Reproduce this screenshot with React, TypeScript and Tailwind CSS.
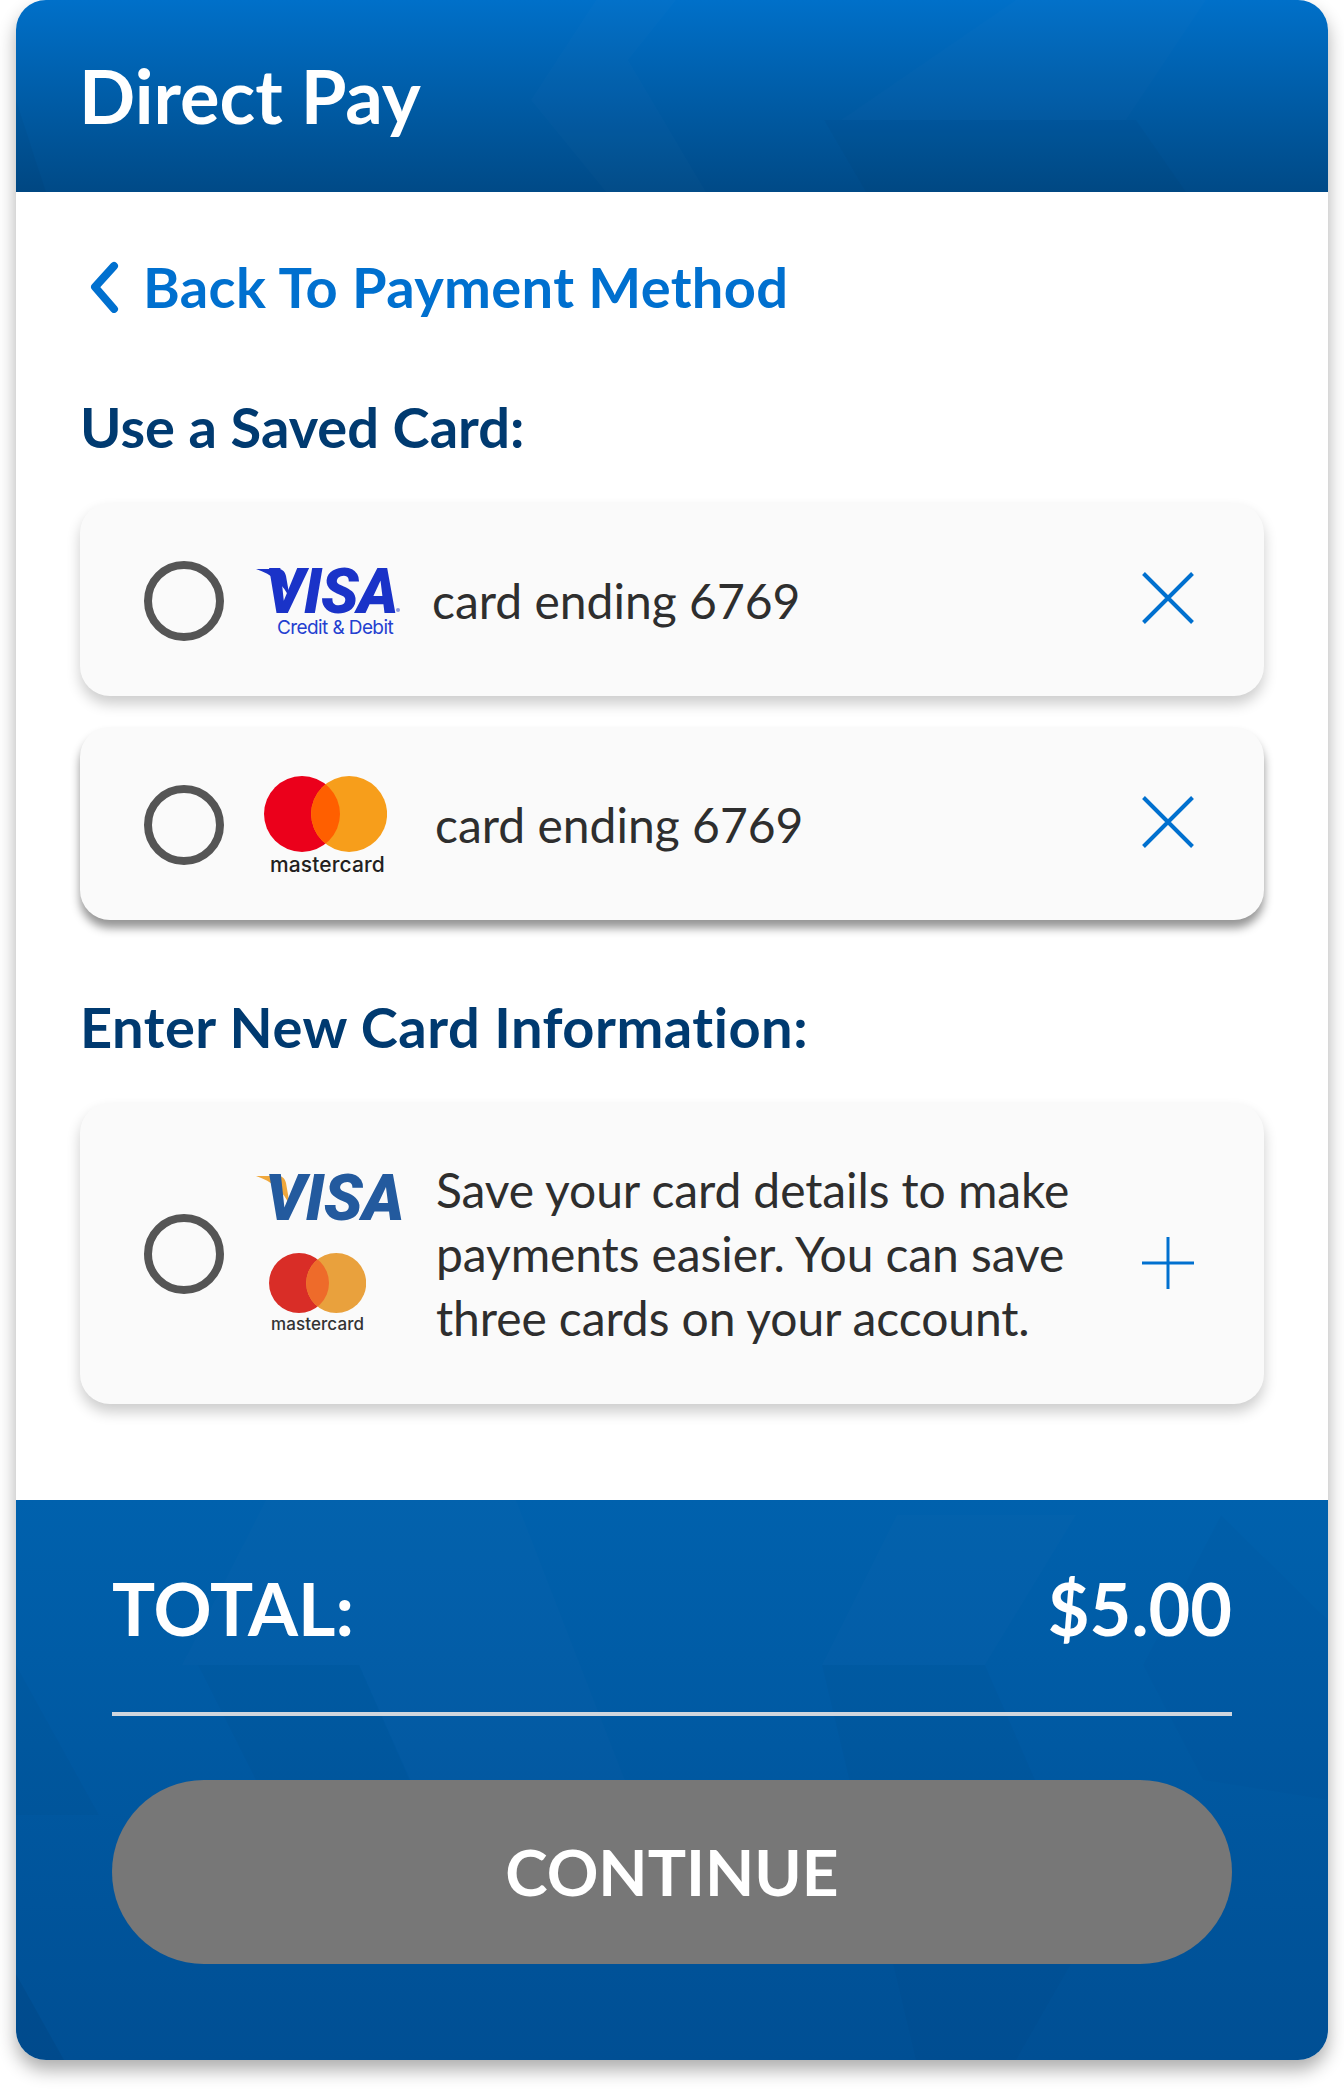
const lato = "font-['Lato','Liberation_Sans',sans-serif] [font-variant-ligatures:none]";

const HeaderFacets = () => (
  <svg className="absolute inset-0 h-full w-full" viewBox="0 0 1312 192" preserveAspectRatio="none">
    <polygon points="808,120 1120,120 1170,192 850,192" fill="#000" opacity="0.025" />
    <polygon points="580,0 515,100 590,192 690,192 612,60 660,0" fill="#fff" opacity="0.012" />
    <polygon points="1000,0 1190,0 1110,120 825,120" fill="#fff" opacity="0.01" />
    <polygon points="0,100 30,192 0,192" fill="#000" opacity="0.03" />
  </svg>
);

const FooterFacets = () => (
  <svg className="absolute inset-0 h-full w-full" viewBox="0 0 1312 560" preserveAspectRatio="none">
    <polygon points="0,165 83,315 0,315" fill="#000" opacity="0.02" />
    <polygon points="0,474 48,560 0,560" fill="#000" opacity="0.05" />
    <polygon points="250,0 166,165 343,165 430,360 640,360 500,0" fill="#fff" opacity="0.012" />
    <polygon points="182,165 343,165 420,340 250,300" fill="#000" opacity="0.02" />
    <polygon points="881,15 806,165 969,165 1060,15" fill="#fff" opacity="0.012" />
    <polygon points="806,165 969,165 1080,420 1000,560 900,560" fill="#000" opacity="0.018" />
    <polygon points="1205,15 1127,165 1187,280 1312,300 1312,120" fill="#000" opacity="0.012" />
  </svg>
);

const Radio = ({ className = "" }: { className?: string }) => (
  <div className={`h-20 w-20 shrink-0 rounded-full border-[8px] border-[#555555] ${className}`} />
);

const CloseIcon = () => (
  <svg width="52" height="52" viewBox="0 0 52 52" className="shrink-0">
    <path d="M1.5 1.5 L50.5 50.5 M50.5 1.5 L1.5 50.5" stroke="#0070cf" strokeWidth="4" fill="none" />
  </svg>
);

const PlusIcon = () => (
  <svg width="52" height="52" viewBox="0 0 52 52" className="shrink-0">
    <path d="M26 0 V52 M0 26 H52" stroke="#0070cf" strokeWidth="3" fill="none" />
  </svg>
);

const VisaWord = ({ color, flag, large }: { color: string; flag: string; large?: boolean }) => (
  <div className="relative h-[45px] w-[144px]">
    <svg width="34" height="30" viewBox="0 0 34 30" className="absolute left-0 top-0">
      <path d="M0 0 H22 C27 0 29 3 30 7 L34 30 C28 16 16 5 0 0 Z" fill={flag} />
    </svg>
    <span
      className={`absolute left-[9px] top-0 font-['Roboto',sans-serif] leading-[45px] font-black italic ${large ? "text-[64px] tracking-[-0.5px]" : "text-[62px] tracking-[-1px]"}`}
      style={{ color }}
    >
      VISA
    </span>
  </div>
);

const Mastercard = ({ size, red, orange, mix }: { size: number; red: string; orange: string; mix: string }) => {
  const shift = size * 0.62;
  const r = size / 2;
  return (
    <svg width={size + shift} height={size} viewBox={`0 0 ${size + shift} ${size}`} className="block">
      <defs>
        <clipPath id={`mc${size}`}>
          <circle cx={r} cy={r} r={r} />
        </clipPath>
      </defs>
      <circle cx={r} cy={r} r={r} fill={red} />
      <circle cx={r + shift} cy={r} r={r} fill={orange} />
      <circle cx={r + shift} cy={r} r={r} fill={mix} clipPath={`url(#mc${size})`} />
    </svg>
  );
};

const CardRow = ({ logo, shadow, textClass }: { logo: React.ReactNode; shadow: string; textClass: string }) => (
  <div className={`flex h-[193px] items-center rounded-[30px] bg-[#fafafa] pl-16 pr-[70px] ${shadow}`}>
    <Radio className="mt-[3px]" />
    {logo}
    <span className={`mt-[2px] flex-1 text-[48px] leading-[64px] text-[#2e2e2e] ${textClass}`}>card ending 6769</span>
    <div className="mb-[3px]">
      <CloseIcon />
    </div>
  </div>
);

const App = () => {
  return (
    <div className={`h-[2092px] w-[1344px] bg-white px-4 ${lato}`}>
      <div className="flex h-[2060px] flex-col overflow-hidden rounded-[30px] bg-white shadow-[0_10px_18px_rgba(0,0,0,0.32)]">
        <div className="relative flex h-[192px] shrink-0 items-center bg-gradient-to-b from-[#0070c9] to-[#004a87] pl-[63px]">
          <HeaderFacets />
          <h1 className="relative text-[74px] leading-[88px] font-bold text-white">Direct Pay</h1>
        </div>

        <div className="flex-1 px-16">
          <div className="mt-[63px] flex h-16 items-center">
            <svg width="32" height="52" viewBox="0 0 32 52" className="ml-[7px] shrink-0">
              <path d="M27 5 L8 26 L27 48" stroke="#0070cf" strokeWidth="8" strokeLinecap="round" strokeLinejoin="round" fill="none" />
            </svg>
            <span className="ml-[24px] text-[56px] leading-[64px] font-bold tracking-[0.35px] text-[#0070cf]">Back To Payment Method</span>
          </div>

          <h2 className="mt-[76px] text-[56px] leading-[64px] font-bold text-[#003a70]">Use a Saved Card:</h2>

          <div className="mt-[44px] flex flex-col gap-[31px]">
            <CardRow
              shadow="shadow-[0_8px_14px_rgba(0,0,0,0.2)]"
              textClass="ml-8"
              logo={
                <div className="relative ml-8 mt-[5px] h-[66px] w-[144px] shrink-0">
                  <VisaWord color="#1a33c8" flag="#1a33c8" />
                  <span className="absolute left-[21px] top-[47px] font-['Inter',sans-serif] text-[19px] leading-[24px] tracking-[-0.6px] text-[#2440d0]">
                    Credit &amp; Debit
                  </span>
                  <span className="absolute left-[140px] top-[39px] h-1 w-1 rounded-full bg-[#8f9be0]" />
                </div>
              }
            />
            <CardRow
              shadow="shadow-[0_8px_10px_rgba(0,0,0,0.42)]"
              textClass="ml-[43px]"
              logo={
                <div className="ml-8 mt-[6px] flex w-[136px] shrink-0 flex-col pl-2">
                  <Mastercard size={76} red="#eb001b" orange="#f79e1b" mix="#ff5f00" />
                  <span className="ml-[6px] mt-[1px] font-['Inter',sans-serif] text-[21px] leading-[24px] font-medium tracking-[0.1px] text-[#231f20]">mastercard</span>
                </div>
              }
            />
          </div>

          <h2 className="mt-[75px] text-[56px] leading-[64px] font-bold tracking-[0.5px] text-[#003a70]">Enter New Card Information:</h2>

          <div className="mt-[44px] flex h-[301px] items-center rounded-[30px] bg-[#fafafa] pl-16 pr-[70px] shadow-[0_8px_14px_rgba(0,0,0,0.2)]">
            <Radio />
            <div className="ml-8 mt-[3px] flex w-[144px] shrink-0 flex-col">
              <VisaWord color="#235a9e" flag="#f0a83c" large />
              <div className="ml-[13px] mt-[32px]">
                <Mastercard size={60} red="#d92d27" orange="#e9a13d" mix="#ee6b2a" />
              </div>
              <span className="ml-[15px] mt-[1px] font-['Inter',sans-serif] text-[17px] leading-[20px] font-medium tracking-[0.1px] text-[#333333]">mastercard</span>
            </div>
            <p className="ml-[36px] flex-1 text-[48px] leading-[64px] tracking-[-0.1px] text-[#2e2e2e]">
              Save your card details to make payments easier. You can save three cards on your account.
            </p>
            <div className="mt-[18px]">
              <PlusIcon />
            </div>
          </div>
        </div>

        <div className="relative h-[560px] shrink-0 bg-gradient-to-b from-[#0061ad] to-[#004f94] px-24 pt-16">
          <FooterFacets />
          <div className="relative flex h-[88px] items-center justify-between text-[72px] leading-[88px] font-bold text-white">
            <span>TOTAL:</span>
            <span>$5.00</span>
          </div>
          <div className="relative mt-[60px] h-1 bg-[#cfd6de]" />
          <button className="relative mt-16 flex h-[184px] w-full items-center justify-center rounded-full bg-[#777777] text-[64px] font-bold text-white">
            CONTINUE
          </button>
        </div>
      </div>
    </div>
  );
};

export default App;
